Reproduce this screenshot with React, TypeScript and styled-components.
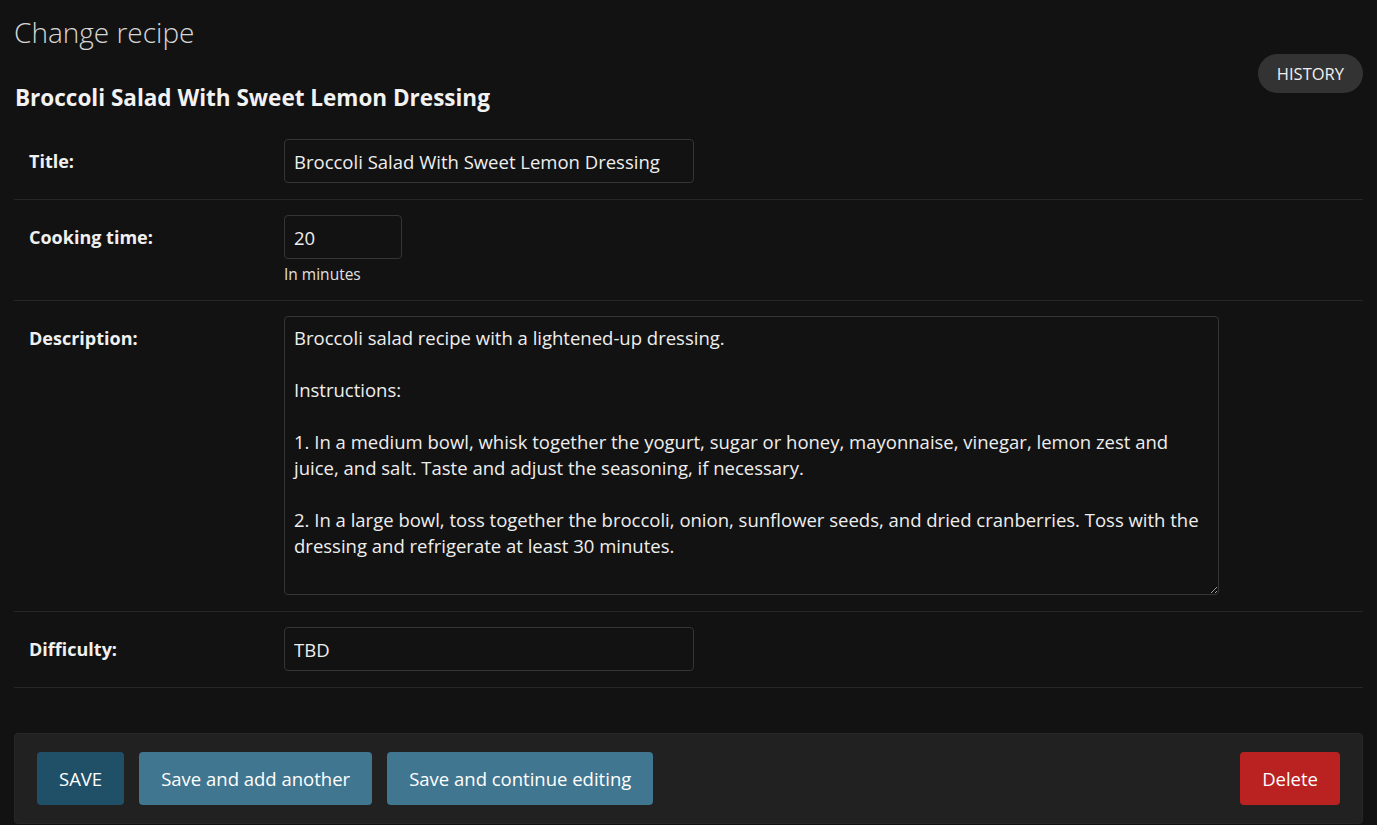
import React from 'react'
import styled, { createGlobalStyle } from 'styled-components'

const GlobalStyle = createGlobalStyle`
  html, body {
    margin: 0;
    padding: 0;
    background: #121212;
    color: #eeeeee;
    font-family: "Open Sans", "Noto Sans", sans-serif;
  }
  * { box-sizing: border-box; }
`

const description = `Broccoli salad recipe with a lightened-up dressing.

Instructions:

1. In a medium bowl, whisk together the yogurt, sugar or honey, mayonnaise, vinegar, lemon zest and juice, and salt. Taste and adjust the seasoning, if necessary.

2. In a large bowl, toss together the broccoli, onion, sunflower seeds, and dried cranberries. Toss with the dressing and refrigerate at least 30 minutes.`

const App: React.FC = () => {
  return (
    <>
      <GlobalStyle />
      <StyledContent>
        <StyledTitle>Change recipe</StyledTitle>
        <StyledHeaderRow>
          <StyledObjectName>Broccoli Salad With Sweet Lemon Dressing</StyledObjectName>
          <StyledHistoryButton>HISTORY</StyledHistoryButton>
        </StyledHeaderRow>

        <StyledFieldset>
          <StyledFormRow>
            <StyledLabel>Title:</StyledLabel>
            <div>
              <StyledInput defaultValue="Broccoli Salad With Sweet Lemon Dressing" $width={410} />
            </div>
          </StyledFormRow>
          <StyledFormRow>
            <StyledLabel>Cooking time:</StyledLabel>
            <div>
              <StyledInput defaultValue="20" $width={118} />
              <StyledHelp>In minutes</StyledHelp>
            </div>
          </StyledFormRow>
          <StyledFormRow>
            <StyledLabel>Description:</StyledLabel>
            <div>
              <StyledTextarea defaultValue={description} />
            </div>
          </StyledFormRow>
          <StyledFormRow>
            <StyledLabel>Difficulty:</StyledLabel>
            <div>
              <StyledInput defaultValue="TBD" $width={410} />
            </div>
          </StyledFormRow>
        </StyledFieldset>

        <StyledSubmitRow>
          <StyledButton $variant="default">SAVE</StyledButton>
          <StyledButton>Save and add another</StyledButton>
          <StyledButton>Save and continue editing</StyledButton>
          <StyledSpacer />
          <StyledButton $variant="danger">Delete</StyledButton>
        </StyledSubmitRow>
      </StyledContent>
    </>
  )
}

const StyledContent = styled.div`
  padding: 14px 14px 0;
`

const StyledTitle = styled.h1`
  margin: 0;
  font-size: 28px;
  font-weight: 300;
  line-height: 36px;
  color: #d6d6d6;
`

const StyledHeaderRow = styled.div`
  display: flex;
  justify-content: space-between;
  align-items: flex-start;
  margin-top: 4px;
`

const StyledObjectName = styled.h2`
  margin: 30px 0 0 1px;
  font-size: 22.5px;
  font-weight: 700;
  line-height: 28px;
  color: #f2f2f2;
`

const StyledHistoryButton = styled.a`
  display: inline-flex;
  align-items: center;
  height: 39px;
  padding: 0 19px;
  border-radius: 20px;
  background: #333333;
  color: #f0f0f0;
  font-size: 16.5px;
  cursor: pointer;
`

const StyledFieldset = styled.div`
  margin-top: 12px;
`

const StyledFormRow = styled.div`
  display: grid;
  grid-template-columns: 255px 1fr;
  padding: 15px 15px 16px;
  border-bottom: 1px solid #272727;
`

const StyledLabel = styled.label`
  font-size: 18px;
  font-weight: 700;
  color: #f0f0f0;
  line-height: 44px;
  height: 44px;
`

const StyledInput = styled.input<{ $width: number }>`
  display: block;
  width: ${(p) => p.$width}px;
  height: 44px;
  padding: 0 9px;
  background: #121212;
  color: #eeeeee;
  border: 1px solid #353535;
  border-radius: 4px;
  font-family: inherit;
  font-size: 18.5px;
  outline: none;
`

const StyledHelp = styled.div`
  margin-top: 5px;
  font-size: 15.5px;
  line-height: 20px;
  color: #e0e0e0;
`

const StyledTextarea = styled.textarea`
  display: block;
  width: 935px;
  height: 279px;
  padding: 8px 9px;
  background: #121212;
  color: #eeeeee;
  border: 1px solid #353535;
  border-radius: 4px;
  font-family: inherit;
  font-size: 18.5px;
  line-height: 26px;
  outline: none;
  resize: vertical;
`

const StyledSubmitRow = styled.div`
  display: flex;
  align-items: center;
  gap: 15px;
  margin-top: 45px;
  padding: 18px 22px;
  background: #212121;
  border: 1px solid #272727;
  border-radius: 4px;
`

const StyledSpacer = styled.div`
  flex: 1;
`

const buttonColors = {
  default: '#205067',
  normal: '#417690',
  danger: '#ba2121',
}

const StyledButton = styled.button<{ $variant?: 'default' | 'normal' | 'danger' }>`
  height: 53px;
  padding: 0 22px;
  border: 0;
  border-radius: 4px;
  background: ${(p) => buttonColors[p.$variant || 'normal']};
  color: #ffffff;
  font-family: inherit;
  font-size: 18.5px;
  cursor: pointer;
`

export default App
